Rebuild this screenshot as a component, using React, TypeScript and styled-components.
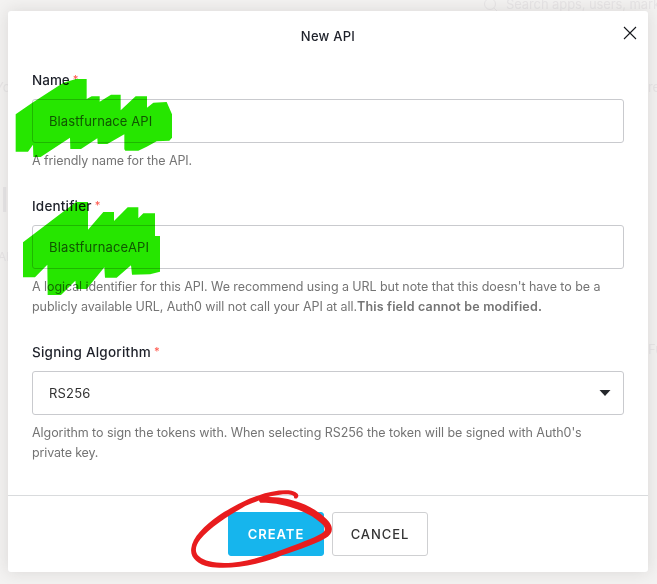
import React from 'react';
import styled, { createGlobalStyle } from 'styled-components';

const GlobalStyle = createGlobalStyle`
  * { box-sizing: border-box; }
  html, body { margin: 0; height: 100%; overflow: hidden; }
  body { background: #f3f2f1; font-family: Inter, "Liberation Sans", sans-serif; }
`;

const Page = styled.main`
  position: relative;
  width: 657px;
  height: 584px;
  padding: 11px 9px 12px 8px;
  overflow: hidden;
`;

const Backdrop = styled.div`
  position: absolute;
  inset: 0;
  color: #e7e5e6;
`;

const Ghost = styled.span<{ $x: number; $y: number; $size?: number }>`
  position: absolute;
  left: ${p => p.$x}px;
  top: ${p => p.$y}px;
  font-size: ${p => p.$size ?? 13}px;
  line-height: 1.2;
  letter-spacing: -0.1px;
  white-space: nowrap;
`;

const GhostIcon = styled.svg`
  position: absolute;
  left: 484px;
  top: -2px;
`;

const Dialog = styled.section`
  position: relative;
  display: flex;
  flex-direction: column;
  width: 640px;
  height: 561px;
  border-radius: 3px;
  background: #fff;
  box-shadow: 0 0 16px rgba(45, 30, 35, 0.12);
`;

const Header = styled.header`
  display: grid;
  grid-template-columns: 36px 1fr 36px;
  align-items: center;
  height: 50px;
`;

const Title = styled.h1`
  grid-column: 2;
  margin: 0;
  text-align: center;
  font-size: 13px;
  line-height: 20px;
  font-weight: 500;
  letter-spacing: 0.25px;
  color: #1e212a;
`;

const Close = styled.button`
  display: flex;
  justify-self: end;
  padding: 0;
  margin: -7px 11px 0 0;
  border: 0;
  background: none;
`;

const Form = styled.form`
  display: flex;
  flex-direction: column;
  gap: 25px;
  flex: 1;
  padding: 9px 24px 0;
`;

const Field = styled.div`
  display: flex;
  flex-direction: column;
`;

const Label = styled.label<{ $spacing: number }>`
  display: flex;
  align-items: flex-start;
  height: 20px;
  margin-bottom: 9px;
  font-size: 13.5px;
  line-height: 20px;
  font-weight: 500;
  letter-spacing: ${p => p.$spacing}px;
  color: #1e212a;
`;

const Required = styled.span`
  margin-left: 3px;
  font-size: 11px;
  line-height: 18px;
  letter-spacing: 0;
  color: #ff5a4f;
`;

const Control = styled.div<{ $spacing: number; $color?: string }>`
  display: flex;
  align-items: center;
  justify-content: space-between;
  height: 44px;
  padding: 0 12px 0 16px;
  border: 1px solid #c9cace;
  border-radius: 3px;
  font-size: 13px;
  letter-spacing: ${p => p.$spacing}px;
  color: ${p => p.$color ?? '#333'};
`;

const Help = styled.p`
  margin: 8px 0 0;
  font-size: 12.5px;
  line-height: 20px;
  color: #747474;
`;

const Line = styled.span<{ $spacing: number }>`
  display: block;
  white-space: nowrap;
  letter-spacing: ${p => p.$spacing}px;
`;

const Strong = styled.strong<{ $spacing: number }>`
  font-weight: 600;
  letter-spacing: ${p => p.$spacing}px;
`;

const Footer = styled.footer`
  display: flex;
  justify-content: center;
  gap: 8px;
  height: 77px;
  padding-top: 16px;
  border-top: 1px solid #d9dbdd;
`;

const Button = styled.button<{ $primary?: boolean }>`
  width: 96px;
  height: 44px;
  padding: 0;
  border: 1px solid ${p => (p.$primary ? '#16b5ed' : '#cfd0d2')};
  border-radius: 3px;
  background: ${p => (p.$primary ? '#16b5ed' : '#fff')};
  color: ${p => (p.$primary ? '#fff' : '#333')};
  font-family: inherit;
  font-size: 13px;
  line-height: 20px;
  padding-bottom: 1px;
  font-weight: ${p => (p.$primary ? 600 : 500)};
  letter-spacing: 0.95px;
`;

const Highlighter = styled.svg`
  position: absolute;
  inset: 0;
  mix-blend-mode: multiply;
  pointer-events: none;
`;

const Marker = styled.svg`
  position: absolute;
  inset: 0;
  pointer-events: none;
`;

export default function App() {
  return (
    <Page>
      <GlobalStyle />
      <Backdrop>
        <GhostIcon width="14" height="14" viewBox="0 0 14 14" fill="none" stroke="currentColor">
          <circle cx="6" cy="6" r="5.5" />
          <path d="m10 10 3 3" />
        </GhostIcon>
        <Ghost $x={506} $y={-3} $size={13}>Search apps, users, mark</Ghost>
        <Ghost $x={-5} $y={80}>Yo</Ghost>
        <Ghost $x={648} $y={80}>re</Ghost>
        <Ghost $x={0} $y={180} $size={34}>I</Ghost>
        <Ghost $x={-2} $y={250} $size={12}>AI</Ghost>
        <Ghost $x={648} $y={342}>Fu</Ghost>
      </Backdrop>
      <Dialog>
        <Header>
          <Title>New API</Title>
          <Close type="button" aria-label="Close">
            <svg width="14" height="14" viewBox="0 0 14 14" fill="none" stroke="#15171c" strokeWidth="1.1">
              <path d="M1 1 13 13M13 1 1 13" />
            </svg>
          </Close>
        </Header>
        <Form>
          <Field>
            <Label $spacing={0}>Name<Required>*</Required></Label>
            <Control $spacing={0.1} $color="#606060">Blastfurnace API</Control>
            <Help><Line $spacing={-0.09}>A friendly name for the API.</Line></Help>
          </Field>
          <Field>
            <Label $spacing={0.19}>Identifier<Required>*</Required></Label>
            <Control $spacing={0.17} $color="#606060">BlastfurnaceAPI</Control>
            <Help>
              <Line $spacing={-0.07}>A logical identifier for this API. We recommend using a URL but note that this doesn't have to be a</Line>
              <Line $spacing={-0.07}>publicly available URL, Auth0 will not call your API at all.<Strong $spacing={0.18}>This field cannot be modified.</Strong></Line>
            </Help>
          </Field>
          <Field>
            <Label $spacing={0.23}>Signing Algorithm<Required>*</Required></Label>
            <Control $spacing={0.2}>
              RS256
              <svg width="12" height="6" viewBox="0 0 12 6"><path d="M.5 0h11L6 6z" fill="#26282c" /></svg>
            </Control>
            <Help>
              <Line $spacing={-0.06}>Algorithm to sign the tokens with. When selecting RS256 the token will be signed with Auth0's</Line>
              <Line $spacing={-0.15}>private key.</Line>
            </Help>
          </Field>
        </Form>
        <Footer>
          <Button type="button" $primary>CREATE</Button>
          <Button type="button">CANCEL</Button>
        </Footer>
      </Dialog>
      <Highlighter width="657" height="584" viewBox="0 0 1971 1752" fill="#26e600">
        <path d="M47 343 97 308 190 248 228 237H260V297L275 289H299V305L333 284H362V331L407 289H441V323L460 308 500 306 516 343V413L508 422 470 424 440 440 415 452H376L373 448V403L322 432H293L292 415 243 447H211L210 413 122 471H100L99 434 84 455H47Z" />
        <path transform="translate(0 540)" d="M69 187 228 66H264V149L310 96H342V123L383 82H415V115L430 100H465V168H480V275L450 283 396 284 393 256 350 293H315L313 262 260 327H229L226 302 183 345H143L142 254 105 292H69Z" />
      </Highlighter>
      <Marker width="657" height="584" viewBox="0 0 1971 1752">
        <path
          transform="translate(540 1440)"
          fill="#e81c1e"
          d="M342 53C345 45 330 41 309 43C283 46 260 51 240 60C225 68 202 73 186 84C142 108 89 144 61 178C45 198 43 217 57 229C80 250 132 253 180 245C230 237 283 218 334 199C367 186 414 170 431 156C439 148 433 136 420 127C405 113 387 103 369 95C330 78 292 68 241 68C233 62 238 54 249 52C294 48 335 58 376 74C408 89 438 112 449 128C462 148 455 164 436 175C395 199 334 215 289 233C224 257 142 270 87 260C52 253 29 232 34 204C37 173 73 136 115 107C149 85 197 58 233 47C269 34 307 28 335 32C352 36 360 46 352 54C349 57 344 56 342 53Z"
        />
      </Marker>
    </Page>
  );
}
